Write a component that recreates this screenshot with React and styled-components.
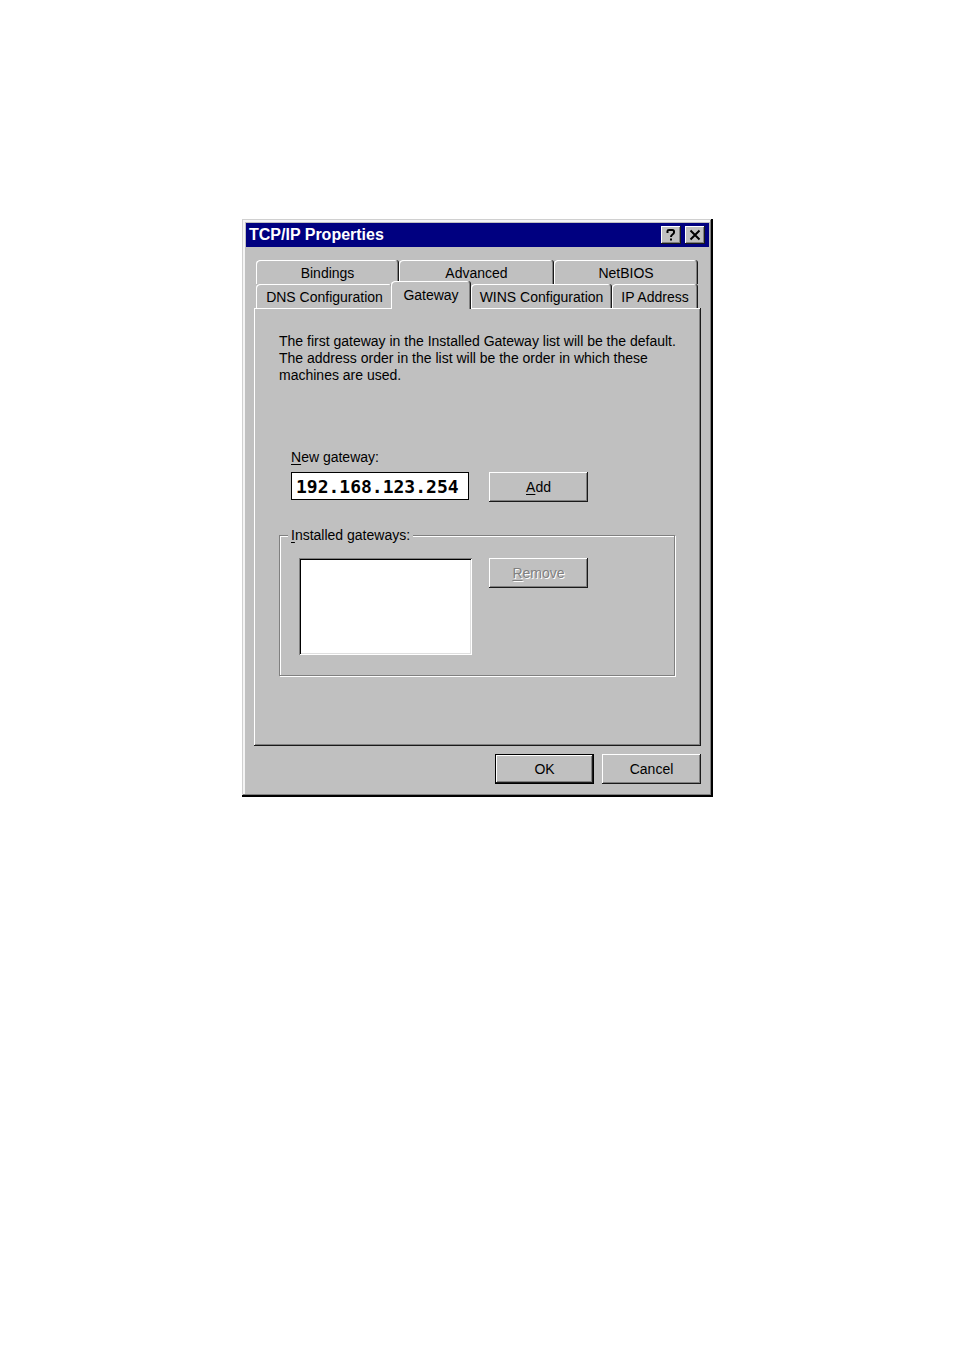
import { useState } from 'react'
import styled, { createGlobalStyle, css } from 'styled-components'

const TAB_ROWS = [
	[
		{ name: 'Bindings', size: 143 },
		{ name: 'Advanced', size: 155 },
		{ name: 'NetBIOS', size: 144 },
	],
	[
		{ name: 'DNS Configuration', size: 137 },
		{ name: 'Gateway', size: 80 },
		{ name: 'WINS Configuration', size: 141 },
		{ name: 'IP Address', size: 86 },
	],
]

const App = () => {
	const [tab, setTab] = useState('Gateway')
	const [gateway, setGateway] = useState('192.168.123.254')

	return (
		<>
			<GlobalStyle />
			<Page>
				<Dialog role="dialog" aria-labelledby="dialog-title">
					<TitleBar>
						<Title id="dialog-title">TCP/IP Properties</Title>
						<TitleButton aria-label="Help">
							<svg width="12" height="14" viewBox="0 0 12 14" fill="none" stroke="#000" strokeWidth="2">
								<path d="M2.500 5V3Q2.500 2 4 2H7.500Q9 2 9 3.500V4.500Q9 5.500 7.500 6.500Q6 7.500 6 9" />
								<path d="M6 10.500V12.500" />
							</svg>
						</TitleButton>
						<TitleButton aria-label="Close">
							<svg width="12" height="14" viewBox="0 0 12 14" fill="none" stroke="#000" strokeWidth="2">
								<path d="M1.500 2.500L10.500 11.500M10.500 2.500L1.500 11.500" />
							</svg>
						</TitleButton>
					</TitleBar>

					<Body>
						<Tabs role="tablist">
							{TAB_ROWS.map((row, i) => (
								<TabRow key={i}>
									{row.map(({ name, size }) => (
										<Tab
											key={name}
											role="tab"
											aria-selected={tab === name}
											$size={size}
											$selected={tab === name}
											onClick={() => setTab(name)}
										>
											{name}
										</Tab>
									))}
								</TabRow>
							))}
						</Tabs>

						<Panel role="tabpanel">
							<Description>
								The first gateway in the Installed Gateway list will be the default.
								The address order in the list will be the order in which these
								machines are used.
							</Description>

							<NewGateway>
								<Label htmlFor="new-gateway"><u>N</u>ew gateway:</Label>
								<Row $gap={20}>
									<AddressInput
										id="new-gateway"
										value={gateway}
										onChange={(e) => setGateway(e.target.value)}
									/>
									<Button><u>A</u>dd</Button>
								</Row>
							</NewGateway>

							<Group>
								<Legend id="installed"><u>I</u>nstalled gateways:</Legend>
								<Row $gap={17}>
									<GatewayList size={5} aria-labelledby="installed" />
									<Button disabled><u>R</u>emove</Button>
								</Row>
							</Group>
						</Panel>

						<Footer>
							<Button $default>OK</Button>
							<Button>Cancel</Button>
						</Footer>
					</Body>
				</Dialog>
			</Page>
		</>
	)
}

export default App

const GlobalStyle = createGlobalStyle`
	* {
		box-sizing: border-box;
	}

	body {
		margin: 0;
		background: #fff;
	}

	button,
	input,
	select {
		font: inherit;
		color: inherit;
		margin: 0;
		padding: 0;
		border: 0;
		border-radius: 0;
		outline: 0;
	}

	u {
		text-underline-offset: 2px;
		text-decoration-thickness: 1px;
	}
`

// Raised edge shared by the panel and the buttons
const raised = css`
	box-shadow:
		inset -1px -1px #1a1a1a,
		inset 1px 1px #fff,
		inset -2px -2px #808080;
`

const Page = styled.main`
	display: flex;
	justify-content: center;
	padding: 219px 0 40px 1px;
	font-family: "Liberation Sans", Arial, sans-serif;
	font-size: 14px;
	line-height: 17px;
	color: #000;
`

const Dialog = styled.section`
	width: 100%;
	max-width: 471px;
	padding: 4px;
	background: #c0c0c0;
	box-shadow:
		inset -2px -2px #000,
		inset 1px 1px #d0d0d0,
		inset -3px -3px #808080,
		inset 3px 3px #f4f4f4;
`

const TitleBar = styled.header`
	display: flex;
	align-items: center;
	gap: 4px;
	height: 24px;
	padding: 0 4px 0 3px;
	background: #000080;
`

const Title = styled.h1`
	flex: 1;
	margin: 0;
	font-size: 16px;
	font-weight: bold;
	line-height: 24px;
	color: #fff;
`

const TitleButton = styled.button`
	display: flex;
	align-items: center;
	justify-content: center;
	width: 20px;
	height: 18px;
	background: #c0c0c0;
	${raised}
`

const Body = styled.div`
	padding: 13px 8px 9px;
`

const Tabs = styled.div`
	padding: 0 3px 0 2px;
`

const TabRow = styled.div`
	display: flex;
	height: 24px;
`

const Tab = styled.button`
	flex: ${(props) => props.$size} 1 0;
	padding-top: 2px;
	white-space: nowrap;
	background: #c0c0c0;
	border-radius: 4px 3px 0 0;
	box-shadow:
		inset -1px 0 #1a1a1a,
		inset 1px 1px #fff,
		inset -2px 0 #808080;

	${(props) =>
		props.$selected &&
		css`
			z-index: 1;
			height: 28px;
			margin: -3px 0 0 -2px;
			padding: 0;
		`}
`

const Panel = styled.div`
	padding: 25px 25px 70px;
	${raised}
`

const Description = styled.p`
	margin: 0;
`

const NewGateway = styled.div`
	margin: 65px 0 25px;
	padding-left: 12px;
`

const Label = styled.label`
	display: block;
	margin-bottom: 6px;
`

const Row = styled.div`
	display: flex;
	align-items: flex-start;
	gap: ${(props) => props.$gap}px;
`

const AddressInput = styled.input`
	width: 178px;
	height: 28px;
	padding: 0 4px;
	background: #fff;
	border: 1px solid #000;
	font-family: "DejaVu Sans Mono", "Liberation Mono", monospace;
	font-size: 18px;
	font-weight: bold;
`

const Button = styled.button`
	width: 99px;
	height: 30px;
	background: #c0c0c0;
	${raised}

	${(props) =>
		props.$default &&
		css`
			border: 1px solid #000;
		`}

	&:disabled {
		color: #808080;
		text-shadow: 1px 1px #fff;
	}
`

const Group = styled.fieldset`
	min-width: 0;
	margin: 0 1px 0 0;
	padding: 14px 19px 20px;
	border: 1px solid #808080;
	box-shadow:
		1px 1px #fff,
		inset 1px 1px #fff;
`

const Legend = styled.legend`
	margin-left: -11px;
	padding: 0 3px;
	background: #c0c0c0;
`

const GatewayList = styled.select`
	width: 173px;
	height: 97px;
	background: #fff;
	box-shadow:
		inset 1px 1px #808080,
		inset -1px -1px #fff,
		inset 2px 2px #000,
		inset -2px -2px #dfdfdf;
`

const Footer = styled.footer`
	display: flex;
	justify-content: flex-end;
	gap: 8px;
	margin-top: 8px;
`
